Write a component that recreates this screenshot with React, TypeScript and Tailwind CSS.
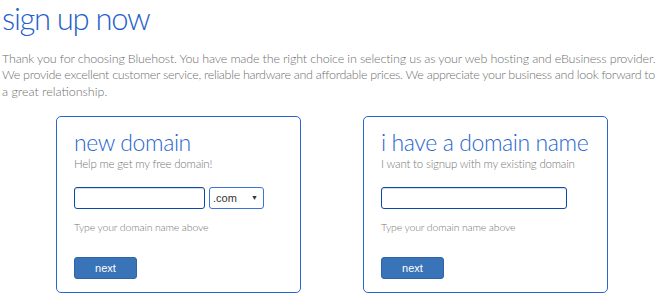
export default function App() {
  return (
    <div className="h-[300px] w-[660px] overflow-hidden bg-white font-['Lato','Open_Sans',sans-serif]">
      <h1 className="pl-[2px] text-[31px] font-light leading-[36px] tracking-[-1.3px] text-[#1f5fcc]">sign up now</h1>
      <p className="mt-[15px] whitespace-nowrap pl-[2px] text-[12.5px] font-light leading-[16.3px] text-[#6f6f6f]">
        <span className="tracking-[-0.15px]">
          Thank you for choosing Bluehost. You have made the right choice in selecting us as your web hosting and eBusiness provider.
        </span>
        <br />
        <span className="tracking-[-0.3px]">
          We provide excellent customer service, reliable hardware and affordable prices. We appreciate your business and look forward to
        </span>
        <br />
        a great relationship.
      </p>
      <div className="mt-[16px] flex gap-[62px] pl-[56px]">
        <DomainCard title="new domain" subtitle="Help me get my free domain!" inputWidth="w-[131px]" withSelect />
        <DomainCard title="i have a domain name" subtitle="I want to signup with my existing domain" inputWidth="w-[186px]" />
      </div>
    </div>
  )
}

function DomainCard({
  title,
  subtitle,
  inputWidth,
  withSelect = false,
}: {
  title: string
  subtitle: string
  inputWidth: string
  withSelect?: boolean
}) {
  return (
    <div className="h-[177px] w-[245px] rounded-[5px] border border-[#2a66cf] pl-[17px] pt-[11px]">
      <div className="whitespace-nowrap text-[23px] font-light leading-[28px] tracking-[-0.4px] text-[#2a66cf]">{title}</div>
      <div className="whitespace-nowrap text-[11.5px] font-light leading-[16px] tracking-[-0.2px] text-[#777]">{subtitle}</div>
      <div className="mt-[15px] flex gap-[4px]">
        <input
          className={`h-[22px] ${inputWidth} rounded-[3px] border border-[#0b4aa8] shadow-[inset_0_1px_1px_rgba(0,0,0,0.15)] outline-none`}
        />
        {withSelect && (
          <div className="flex h-[22px] w-[55px] items-center justify-between rounded-[3px] border border-[#3b73d6] pl-[3px] pr-[5px] font-['Liberation_Sans',sans-serif] text-[11px] text-[#333]">
            <span>.com</span>
            <span className="text-[7px]">▼</span>
          </div>
        )}
      </div>
      <div className="mt-[11px] whitespace-nowrap text-[10.5px] font-light leading-[14px] tracking-[-0.15px] text-[#777]">
        Type your domain name above
      </div>
      <button className="mt-[23px] h-[22px] w-[63px] rounded-[3px] border border-[#2d64a8] bg-[#3a74b8] font-['Liberation_Sans',sans-serif] text-[11px] text-white">
        next
      </button>
    </div>
  )
}
